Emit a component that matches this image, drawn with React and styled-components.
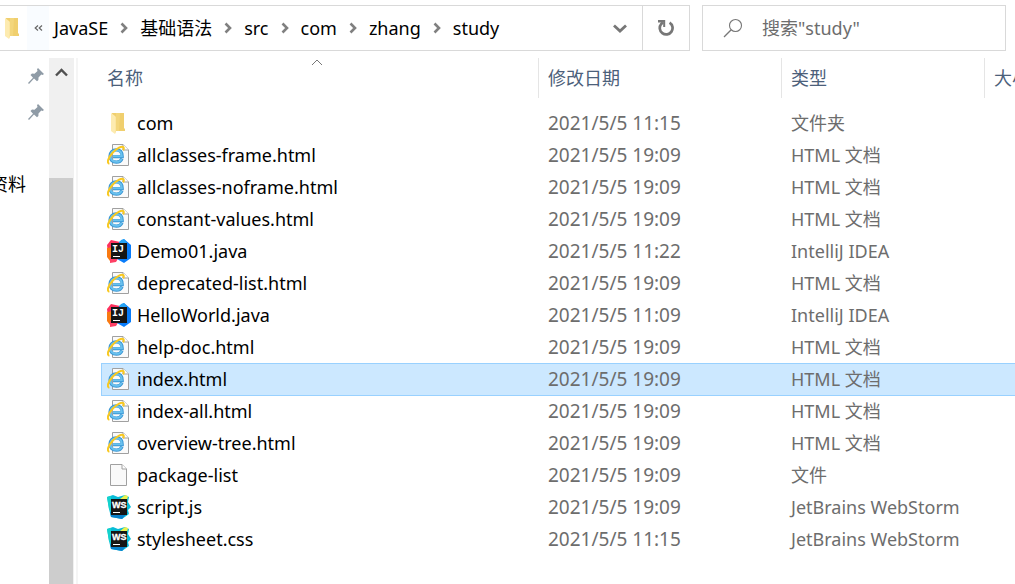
import React from "react";
import styled, { createGlobalStyle, css } from "styled-components";

const GlobalStyle = createGlobalStyle`
  * { box-sizing: border-box; }
  html, body, #root { height: 100%; }
  body {
    margin: 0;
    overflow: hidden;
    background: #fff;
    color: #000;
    font-family: "Noto Sans", "Noto Sans CJK SC", sans-serif;
    font-size: 18px;
    line-height: 24px;
  }
  button, input { font: inherit; color: inherit; }
`;

const Window = styled.div`
  display: flex;
  flex-direction: column;
  height: 100%;
`;

const TopBar = styled.header`
  display: flex;
  gap: 12px;
  flex: none;
  padding: 5px 9px 7px 0;
`;

const AddressBar = styled.nav`
  display: flex;
  flex: 1;
  min-width: 0;
  height: 46px;
  border: 1px solid #d9d9d9;
  border-left: 0;
`;

const FolderSlot = styled.span`
  display: flex;
  align-items: center;
  padding: 0 8px 0 5px;
`;

const PlainButton = styled.button`
  display: flex;
  align-items: center;
  justify-content: center;
  padding: 0;
  border: 0;
  background: none;
`;

const MoreButton = styled(PlainButton)`
  width: 22px;
  margin-right: 5px;
  background: #f9fcff;
`;

const Crumbs = styled.ol`
  display: flex;
  flex: 1;
  margin: 0;
  padding: 0;
  list-style: none;
`;

const Crumb = styled.li`
  display: flex;
  align-items: center;
`;

const CrumbLink = styled.a`
  color: inherit;
  text-decoration: none;
  white-space: nowrap;
`;

const CrumbArrow = styled(PlainButton)`
  width: 32px;
  height: 44px;
`;

const HistoryButton = styled(PlainButton)`
  width: 44px;
`;

const RefreshButton = styled(PlainButton)`
  width: 47px;
  border-left: 1px solid #d9d9d9;
`;

const SearchBox = styled.label`
  display: flex;
  align-items: center;
  gap: 19px;
  flex: 0 1 304px;
  min-width: 0;
  height: 46px;
  padding-left: 20px;
  border: 1px solid #d9d9d9;
`;

const SearchInput = styled.input`
  flex: 1;
  min-width: 0;
  padding: 0;
  border: 0;
  outline: 0;
  background: none;
  &::placeholder { color: #6d6d6d; opacity: 1; }
`;

const Body = styled.div`
  display: flex;
  flex: 1;
  min-height: 0;
`;

const QuickAccess = styled.ul`
  flex: none;
  width: 49px;
  margin: 0;
  padding: 0;
  overflow: hidden;
  list-style: none;
`;

const QuickItem = styled.li`
  display: flex;
  align-items: center;
  justify-content: flex-end;
  height: 36px;
  padding-right: ${(p) => (p.$pinned ? 5 : 23)}px;
  white-space: nowrap;
`;

const ScrollTrack = styled.div`
  display: flex;
  flex-direction: column;
  flex: none;
  width: 25px;
  background: #f0f0f0;
`;

const ScrollUp = styled(PlainButton)`
  width: 25px;
  height: 28px;
`;

const ScrollThumb = styled.div`
  flex: 1;
  width: 24px;
  margin-top: 92px;
  background: #cdcdcd;
`;

const FilePane = styled.main`
  flex: 1;
  min-width: 0;
  margin-left: 2px;
  padding-left: 23px;
  border-left: 2px solid #f5f5f5;
  overflow: hidden;
`;

const FileTable = styled.table`
  width: 100%;
  table-layout: fixed;
  border-collapse: collapse;
`;

const Column = styled.col`
  width: ${(p) => p.$width};
`;

const HeadCell = styled.th`
  position: relative;
  padding: 0 0 9px;
  font-weight: 400;
  text-align: left;
  color: #4c607a;
`;

const HeadLabel = styled.div`
  height: 40px;
  padding-left: ${(p) => (p.$first ? 6 : 9)}px;
  border-left: ${(p) => (p.$first ? "0" : "1px solid #e5e5e5")};
  line-height: 40px;
  white-space: nowrap;
  overflow: hidden;
`;

const SortMark = styled.span`
  position: absolute;
  top: 1px;
  left: 0;
  right: 5px;
  display: flex;
  justify-content: center;
`;

const Cell = styled.td`
  height: 32px;
  padding: 0 0 0 10px;
  color: #6d6d6d;
  line-height: 32px;
  white-space: nowrap;
`;

const NameCell = styled(Cell)`
  padding-left: 6px;
  color: #000;
`;

const FileName = styled.div`
  display: flex;
  align-items: center;
  gap: 6px;
`;

const DateText = styled.time`
  font-size: 19px;
`;

const FileRow = styled.tr`
  ${(p) =>
    p.$selected &&
    css`
      background: #cce8ff;
      ${Cell} { box-shadow: inset 0 1px #99d1ff, 0 1px #99d1ff; }
      ${NameCell} { box-shadow: inset 0 1px #99d1ff, 0 1px #99d1ff, inset 1px 0 #99d1ff; }
    `}
`;

const Icon = styled.svg`
  display: block;
  flex: none;
`;

function FolderShape() {
  return (
    <>
      <path d="M1 0H13V15L14 16V18H3Z" fill="#f0cf6e" />
      <path d="M5 0H9L8 18H4Z" fill="#f3d67c" />
      <path d="M0 0L4 3V21L0 18Z" fill="#fdebb0" />
      <path d="M4 3L5 4V19L4 21Z" fill="#fbe6a2" />
    </>
  );
}

function FolderIcon() {
  return (
    <Icon width="24" height="24" viewBox="-4 -2 24 24" aria-hidden="true">
      <FolderShape />
    </Icon>
  );
}

function HtmlIcon() {
  return (
    <Icon width="24" height="24" viewBox="0 0 24 24" aria-hidden="true">
      <path d="M5.5 1.5H16L21.5 7V22.5H5.5Z" fill="#fafafa" stroke="#a0a0a0" />
      <path d="M16 1.5V7H21.5" fill="#fff" stroke="#a0a0a0" />
      <path
        d="M15 15.6C14 18.2 11.9 19.2 9.4 19.2C5.6 19.2 3 16.8 3 13.1C3 9.4 5.6 6.9 9.3 6.9C13.2 6.9 15.2 9.4 15.2 13.6H6"
        fill="none"
        stroke="#3a96d4"
        strokeWidth="3.2"
      />
      <path
        d="M14.7 15.8C13.6 18 11.7 18.9 9.4 18.9C5.9 18.9 3.4 16.6 3.4 13.1C3.4 9.6 5.9 7.2 9.3 7.2C12.8 7.2 14.9 9.5 14.9 13.3H6"
        fill="none"
        stroke="#69c1ee"
        strokeWidth="1.9"
      />
      <path
        d="M2.4 20.8C-.6 20.2 1.2 14.6 5.4 10C9.8 5.2 15.1 2.4 16.5 4.3C17 5 16.8 6 16.1 7.2"
        fill="none"
        stroke="#f9c920"
        strokeWidth="2"
      />
    </Icon>
  );
}

function IdeaIcon() {
  return (
    <Icon width="24" height="24" viewBox="0 0 24 24" aria-hidden="true">
      <path d="M0 6L4 1L13 3L14 12L5 17L1 15Z" fill="#fe315d" />
      <path d="M0 9L6 8V20L3 22L0 18Z" fill="#f97a12" />
      <path d="M3 18L12 18L9 23L3 24Z" fill="#fe4065" />
      <path d="M17 0L24 6V19L17 24L10 20L12 3Z" fill="#087cfa" />
      <path d="M14 1L17 0L20 4H12Z" fill="#27a4f5" />
      <rect x="4" y="4" width="16" height="16" fill="#151515" />
      <text
        x="5"
        y="13"
        fontFamily="Liberation Mono, monospace"
        fontWeight="700"
        fontSize="10"
        fill="#fff"
      >
        IJ
      </text>
      <rect x="6" y="17" width="7" height="1" fill="#fff" />
    </Icon>
  );
}

function WebStormIcon() {
  return (
    <Icon width="24" height="24" viewBox="0 0 24 24" aria-hidden="true">
      <path d="M0 2L6 0L11 2L18 0L22 2L21 7L24 12L21 15L22 19L15 24L4 22L2 14Z" fill="#08bcd8" />
      <path d="M3 17H21L15 24L4 22Z" fill="#0880cc" />
      <path d="M0 2L4 1V16L2 14Z" fill="#13d3cc" />
      <path d="M13 4L18 0L21 1L20 5Z" fill="#eef14d" />
      <rect x="4" y="4" width="16" height="16" fill="#151515" />
      <text
        x="5"
        y="13"
        fontFamily="Liberation Sans, sans-serif"
        fontWeight="700"
        fontSize="9"
        fill="#fff"
        stroke="#fff"
        strokeWidth=".3"
      >
        WS
      </text>
      <rect x="6" y="17" width="7" height="1" fill="#fff" />
    </Icon>
  );
}

function BlankIcon() {
  return (
    <Icon width="24" height="24" viewBox="0 0 24 24" aria-hidden="true">
      <path d="M3.5 1.5H15L19.5 6V22.5H3.5Z" fill="#f9f9f9" stroke="#a0a0a0" />
      <path d="M15 1.5V6H19.5" fill="#fff" stroke="#a0a0a0" />
    </Icon>
  );
}

function PinIcon() {
  return (
    <Icon width="16" height="16" viewBox="0 0 16 16" aria-hidden="true">
      <path
        d="M10 0L16 6L14.6 7L13.3 6.6L10.5 9.6L10.4 12L9 13.3L6 10.6L1 16L0 15L5 9.8L2.5 7L4 5.6L6.5 5.7L9.5 3L9 1.2Z"
        fill="#8f9ba6"
      />
    </Icon>
  );
}

function Chevron({ width, height, d, color, stroke }) {
  return (
    <Icon width={width} height={height} viewBox={`0 0 ${width} ${height}`} aria-hidden="true">
      <path d={d} fill="none" stroke={color} strokeWidth={stroke} />
    </Icon>
  );
}

const crumbs = ["JavaSE", "基础语法", "src", "com", "zhang", "study"];

const fileKinds = {
  folder: { icon: FolderIcon, label: "文件夹" },
  html: { icon: HtmlIcon, label: "HTML 文档" },
  java: { icon: IdeaIcon, label: "IntelliJ IDEA" },
  plain: { icon: BlankIcon, label: "文件" },
  web: { icon: WebStormIcon, label: "JetBrains WebStorm" },
};

const files = [
  { name: "com", date: "2021/5/5 11:15", kind: "folder" },
  { name: "allclasses-frame.html", date: "2021/5/5 19:09", kind: "html" },
  { name: "allclasses-noframe.html", date: "2021/5/5 19:09", kind: "html" },
  { name: "constant-values.html", date: "2021/5/5 19:09", kind: "html" },
  { name: "Demo01.java", date: "2021/5/5 11:22", kind: "java" },
  { name: "deprecated-list.html", date: "2021/5/5 19:09", kind: "html" },
  { name: "HelloWorld.java", date: "2021/5/5 11:09", kind: "java" },
  { name: "help-doc.html", date: "2021/5/5 19:09", kind: "html" },
  { name: "index.html", date: "2021/5/5 19:09", kind: "html", selected: true },
  { name: "index-all.html", date: "2021/5/5 19:09", kind: "html" },
  { name: "overview-tree.html", date: "2021/5/5 19:09", kind: "html" },
  { name: "package-list", date: "2021/5/5 19:09", kind: "plain" },
  { name: "script.js", date: "2021/5/5 19:09", kind: "web" },
  { name: "stylesheet.css", date: "2021/5/5 11:15", kind: "web" },
];

export default function App() {
  return (
    <Window>
      <GlobalStyle />
      <TopBar>
        <AddressBar>
          <FolderSlot>
            <Icon width="14" height="21" viewBox="0 0 14 21" aria-hidden="true">
              <FolderShape />
            </Icon>
          </FolderSlot>
          <MoreButton type="button" aria-label="更多">
            <Chevron width={9} height={6} d="M4 .5L1.2 3L4 5.5M8 .5L5.2 3L8 5.5" color="#666" stroke={1.2} />
          </MoreButton>
          <Crumbs>
            {crumbs.map((name, i) => (
              <Crumb key={name}>
                <CrumbLink href="#">{name}</CrumbLink>
                {i < crumbs.length - 1 && (
                  <CrumbArrow type="button" aria-label={name}>
                    <Chevron width={8} height={12} d="M1.5 1.5L6 6L1.5 10.5" color="#808080" stroke={2.6} />
                  </CrumbArrow>
                )}
              </Crumb>
            ))}
          </Crumbs>
          <HistoryButton type="button" aria-label="历史">
            <Chevron width={14} height={9} d="M1 1.5L7 7L13 1.5" color="#777" stroke={2.8} />
          </HistoryButton>
          <RefreshButton type="button" aria-label="刷新">
            <Icon width="16" height="16" viewBox="0 0 16 16" aria-hidden="true">
              <path d="M11.6 2.6A6.4 6.4 0 1 1 3.2 4L5 2.4" fill="none" stroke="#777" strokeWidth="2.7" />
              <path d="M0 0H7.2V7H5.2V2.4H0Z" fill="#777" />
            </Icon>
          </RefreshButton>
        </AddressBar>
        <SearchBox>
          <Icon width="20" height="20" viewBox="0 0 20 20" aria-hidden="true">
            <circle cx="12.5" cy="7.5" r="6" fill="none" stroke="#777" strokeWidth="1.1" />
            <path d="M8.2 11.8L1 19" stroke="#777" strokeWidth="1.3" />
          </Icon>
          <SearchInput type="text" placeholder={'搜索"study"'} />
        </SearchBox>
      </TopBar>
      <Body>
        <QuickAccess>
          <QuickItem $pinned><PinIcon /></QuickItem>
          <QuickItem $pinned><PinIcon /></QuickItem>
          <QuickItem />
          <QuickItem>资料</QuickItem>
        </QuickAccess>
        <ScrollTrack>
          <ScrollUp type="button" aria-label="向上滚动">
            <Chevron width={13} height={9} d="M1 7.5L6.5 2L12 7.5" color="#505050" stroke={2.4} />
          </ScrollUp>
          <ScrollThumb />
        </ScrollTrack>
        <FilePane>
          <FileTable>
            <colgroup>
              <Column $width="437px" />
              <Column $width="243px" />
              <Column $width="203px" />
              <Column $width="auto" />
            </colgroup>
            <thead>
              <tr>
                <HeadCell scope="col">
                  <SortMark>
                    <Chevron width={12} height={7} d="M1 6L6 1L11 6" color="#777" stroke={1} />
                  </SortMark>
                  <HeadLabel $first>名称</HeadLabel>
                </HeadCell>
                <HeadCell scope="col"><HeadLabel>修改日期</HeadLabel></HeadCell>
                <HeadCell scope="col"><HeadLabel>类型</HeadLabel></HeadCell>
                <HeadCell scope="col"><HeadLabel>大小</HeadLabel></HeadCell>
              </tr>
            </thead>
            <tbody>
              {files.map(({ name, date, kind, selected }) => {
                const Kind = fileKinds[kind];
                return (
                  <FileRow key={name} $selected={selected}>
                    <NameCell>
                      <FileName><Kind.icon />{name}</FileName>
                    </NameCell>
                    <Cell><DateText>{date}</DateText></Cell>
                    <Cell>{Kind.label}</Cell>
                    <Cell />
                  </FileRow>
                );
              })}
            </tbody>
          </FileTable>
        </FilePane>
      </Body>
    </Window>
  );
}
